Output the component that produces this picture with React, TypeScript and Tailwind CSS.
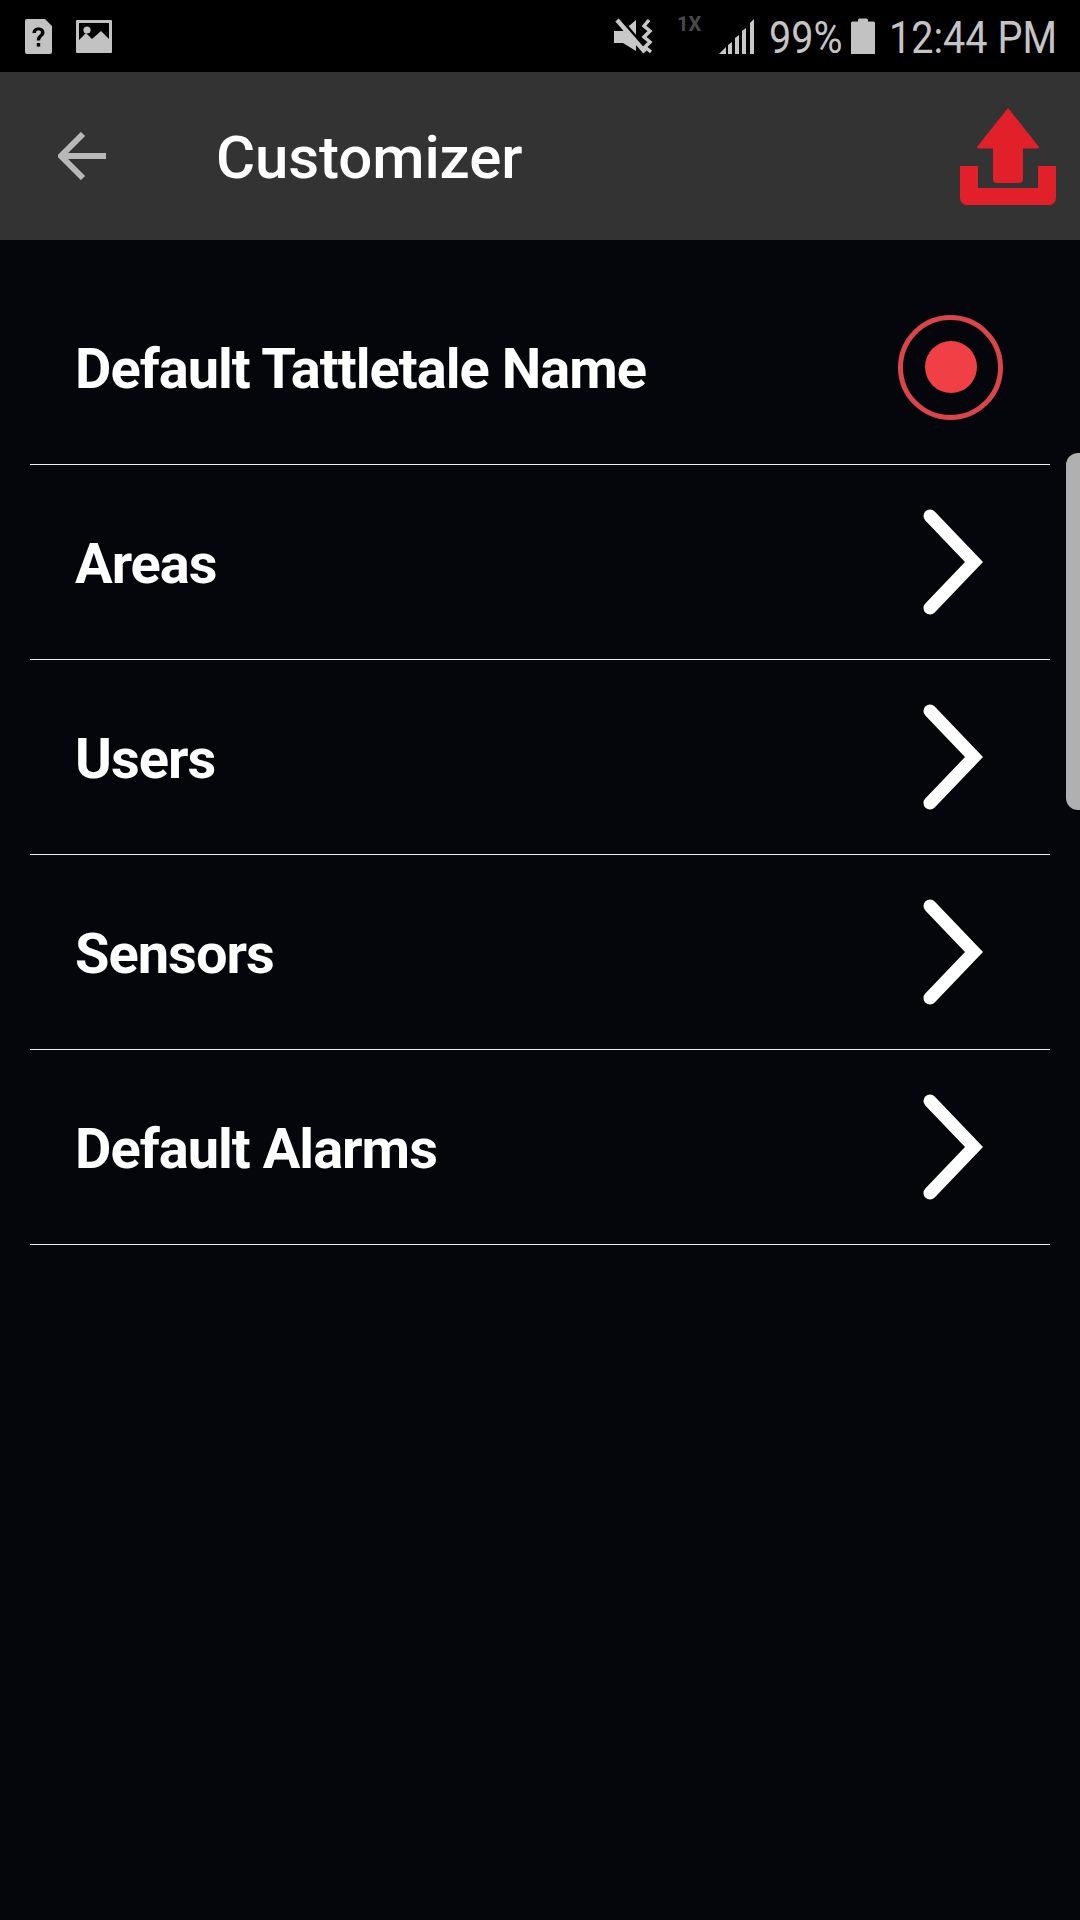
const rows = ["Areas", "Users", "Sensors", "Default Alarms"];

function SimIcon() {
  return (
    <svg width="27" height="35" viewBox="0 0 27 35">
      <path d="M2 0H20L27 7V33a2 2 0 0 1-2 2H2a2 2 0 0 1-2-2V2a2 2 0 0 1 2-2Z" fill="#c2c2c2" />
      <path d="M7.500 14c0-3.500 2.600-5.500 6-5.500s6 1.900 6 5c0 4-4.300 4-4.300 8h-3.400c0-5.200 4.100-5.400 4.100-8 0-1.400-.9-2.200-2.400-2.200s-2.500 1-2.500 2.700Z" fill="#000" />
      <rect x="11.800" y="24" width="3.400" height="3.600" fill="#000" />
    </svg>
  );
}

function PictureIcon() {
  return (
    <svg width="36" height="33" viewBox="0 0 36 33">
      <path fillRule="evenodd" d="M1 0H35a1 1 0 0 1 1 1V32a1 1 0 0 1-1 1H1a1 1 0 0 1-1-1V1a1 1 0 0 1 1-1ZM3 3V20L10 13 16 19 25 11 33 19V3Z" fill="#c2c2c2" />
      <circle cx="11" cy="10" r="3.600" fill="#c2c2c2" />
    </svg>
  );
}

function MuteIcon() {
  return (
    <svg width="39" height="36" viewBox="0 0 39 36" fill="none">
      <path d="M0 13H9L22 2V33L9 25H0Z" fill="#c8c8c8" />
      <path d="M6 1L33 33" stroke="#000" strokeWidth="4" />
      <path d="M3 2L31 34" stroke="#c8c8c8" strokeWidth="4.500" />
      <path d="M35 2L30 8L36 13L30 19L36 24L31 29L37 34" stroke="#c8c8c8" strokeWidth="3.500" />
    </svg>
  );
}

function SignalIcon() {
  return (
    <svg width="36" height="35" viewBox="0 0 36 35" fill="#c8c8c8">
      <path d="M0 35L7 28V35Z" />
      <path d="M9 26L13 23V35H9Z" />
      <path d="M16 19L20 16V35H16Z" />
      <path d="M23 12L27 9V35H23Z" />
      <path d="M31 4L35 0V35H31Z" />
    </svg>
  );
}

function BatteryIcon() {
  return (
    <svg width="24" height="36" viewBox="0 0 24 36">
      <path d="M7 2a1.500 1.500 0 0 1 1.500-1.500h7A1.500 1.500 0 0 1 17 2V3.500h5.500A1.500 1.500 0 0 1 24 5V36H0V5a1.500 1.500 0 0 1 1.500-1.500H7Z" fill="#c2c2c2" />
    </svg>
  );
}

function UploadIcon() {
  return (
    <svg width="96" height="97" viewBox="0 0 96 97" fill="#e2202a">
      <path d="M48 0L79 39a1.200 1.200 0 0 1-1 1.500H63V71a4 4 0 0 1-4 4H37a4 4 0 0 1-4-4V40.500H18a1.200 1.200 0 0 1-1-1.500Z" />
      <path d="M0 58H18V80H78V58H96V90a7 7 0 0 1-7 7H7a7 7 0 0 1-7-7Z" />
    </svg>
  );
}

function Chevron() {
  return (
    <svg width="62" height="106" viewBox="0 0 62 106" fill="none">
      <path d="M8 7L52 53L8 99" stroke="#fff" strokeWidth="13" strokeLinecap="round" strokeLinejoin="miter" />
    </svg>
  );
}

export default function App() {
  return (
    <div className="relative h-[1920px] w-[1080px] overflow-hidden bg-[#05060b] font-['Roboto',sans-serif] text-white">
      {/* status bar */}
      <div className="flex h-[72px] items-center bg-black pl-[25px] text-[#c4c4c4]">
        <SimIcon />
        <div className="ml-[24px]">
          <PictureIcon />
        </div>
        <div className="ml-[502px]">
          <MuteIcon />
        </div>
        <span className="mb-[24px] ml-[24px] w-[23px] text-[20px] leading-none font-bold text-[#4a4a4a]">1X</span>
        <div className="ml-[19px]">
          <SignalIcon />
        </div>
        <span className="mt-[2px] ml-[14px] inline-block w-[70px] origin-left scale-x-[0.88] text-[45px] leading-none whitespace-nowrap">99%</span>
        <div className="ml-[12px]">
          <BatteryIcon />
        </div>
        <span className="mt-[2px] ml-[14px] inline-block origin-left scale-x-[0.88] text-[45px] leading-none whitespace-nowrap">12:44 PM</span>
      </div>

      {/* app header */}
      <div className="flex h-[168px] items-center bg-[#333333] pr-[24px] pl-[58px]">
        <svg width="48" height="48" viewBox="0 0 48 48" fill="none" stroke="#b8b8b8" strokeWidth="6">
          <path d="M48 24H3M25 2L3 24L25 46" />
        </svg>
        <h1 className="mt-[4px] ml-[110px] text-[60px] leading-none font-medium tracking-[-0.1px]">Customizer</h1>
        <div className="ml-auto">
          <UploadIcon />
        </div>
      </div>

      {/* list */}
      <div className="mx-[30px] mt-[30px]">
        <div className="flex h-[195px] items-center justify-between border-b border-[#f0f0f0] pr-[47px] pl-[45px]">
          <span className="mt-[4px] text-[56px] leading-none font-bold tracking-[-1px]">Default Tattletale Name</span>
          <div className="flex h-[105px] w-[105px] items-center justify-center rounded-full border-[5px] border-[#d9454a]">
            <div className="h-[52px] w-[52px] rounded-full bg-[#f04045]" />
          </div>
        </div>
        {rows.map((label) => (
          <div key={label} className="flex h-[195px] items-center justify-between border-b border-[#f0f0f0] pr-[66px] pl-[45px]">
            <span className="mt-[4px] text-[56px] leading-none font-bold tracking-[-1px]">{label}</span>
            <Chevron />
          </div>
        ))}
      </div>

      {/* scroll indicator */}
      <div className="absolute top-[453px] right-0 h-[357px] w-[14px] rounded-l-[12px] bg-[#b0b0b0]" />
    </div>
  );
}
